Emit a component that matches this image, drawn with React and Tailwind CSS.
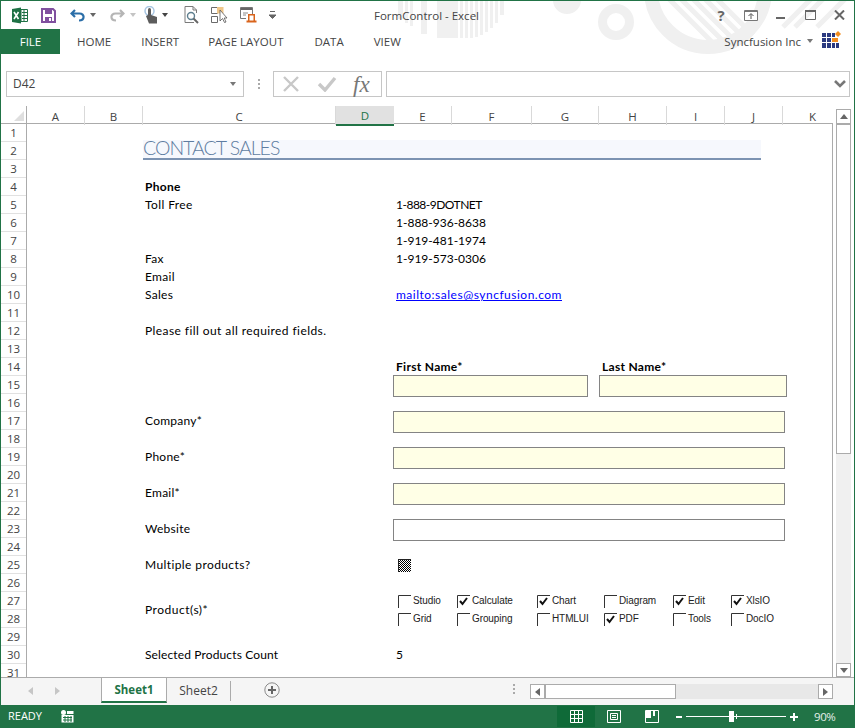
import React from 'react';

const columns = ['A', 'B', 'C', 'D', 'E', 'F', 'G', 'H', 'I', 'J', 'K'];
const rowNumbers = Array.from({ length: 31 }, (_, i) => i + 1);
const productRows = [
  [['Studio', false], ['Calculate', true], ['Chart', true], ['Diagram', false], ['Edit', true], ['XlsIO', true]],
  [['Grid', false], ['Grouping', false], ['HTMLUI', false], ['PDF', true], ['Tools', false], ['DocIO', false]],
];

const Watermark = () => (
  <svg className="absolute left-0 top-0 pointer-events-none" width="853" height="53" viewBox="0 0 853 53">
    <g fill="#f0f0f0">
      <rect x="397" y="0" width="5" height="18" />
      <rect x="404" y="0" width="3" height="22" />
      <rect x="409" y="0" width="3" height="25" />
      <rect x="420" y="0" width="6" height="33" />
      <rect x="436" y="0" width="21" height="37" />
      <rect x="459" y="0" width="3" height="37" />
      <rect x="464" y="0" width="3" height="37" />
      <rect x="469" y="0" width="3" height="37" />
      <rect x="474" y="0" width="3" height="36" />
      <rect x="479" y="0" width="3" height="34" />
      <rect x="484" y="0" width="3" height="31" />
      <rect x="489" y="0" width="3" height="27" />
      <rect x="494" y="0" width="3" height="22" />
      <rect x="499" y="0" width="4" height="14" />
      <circle cx="566" cy="-1" r="14" />
    </g>
    <circle cx="615" cy="21" r="13.5" fill="none" stroke="#f0f0f0" strokeWidth="9" />
    <clipPath id="ring">
      <circle cx="707" cy="-11" r="64" />
    </clipPath>
    <circle cx="707" cy="-11" r="57" fill="none" stroke="#f0f0f0" strokeWidth="14" />
    <g clipPath="url(#ring)" stroke="#f0f0f0" strokeWidth="5">
      <path d="M660 -10 L720 50" />
      <path d="M672 -10 L732 50" />
      <path d="M684 -10 L744 50" />
      <path d="M696 -10 L756 50" />
      <path d="M708 -10 L768 50" />
    </g>
    <g stroke="#f0f0f0" strokeWidth="5">
      <path d="M812 -4 L782 26" />
      <path d="M824 -4 L794 26" />
      <path d="M846 -4 L816 26" />
    </g>
  </svg>
);

const Quick = {
  Excel: () => (
    <svg width="17" height="17" viewBox="0 0 17 17">
      <path d="M1 2 L10 0.5 V16.5 L1 15 Z" fill="#1e7145" />
      <path d="M10 2.5 H16.5 V14.5 H10 Z" fill="#fff" stroke="#1e7145" />
      <path d="M11 5.5 H16 M11 8.5 H16 M11 11.5 H16 M13 3 V14" stroke="#1e7145" />
      <path d="M3 5 L7.5 12 M7.5 5 L3 12" stroke="#fff" strokeWidth="1.6" />
    </svg>
  ),
  Save: () => (
    <svg width="15" height="15" viewBox="0 0 15 15">
      <path d="M1 1 H12 L14 3 V14 H1 Z" fill="none" stroke="#80509f" strokeWidth="2" />
      <rect x="4" y="1" width="7" height="5" fill="#80509f" />
      <rect x="4" y="9" width="7" height="5" fill="#80509f" />
      <rect x="8" y="10" width="2" height="3" fill="#fff" />
    </svg>
  ),
  Undo: ({ color, className }) => (
    <svg className={className} width="15" height="13" viewBox="0 0 15 13">
      <path d="M5 1 L1.5 4.5 L5 8 M2 4.5 H9.5 C15 4.5 15 11.5 9 11.5" fill="none" stroke={color} strokeWidth="2.2" />
    </svg>
  ),
  Caret: ({ color }) => (
    <svg width="6" height="4" viewBox="0 0 6 4">
      <path d="M0 0 H6 L3 4 Z" fill={color} />
    </svg>
  ),
  Touch: () => (
    <svg width="16" height="18" viewBox="0 0 16 18">
      <circle cx="5.5" cy="5" r="4.5" fill="none" stroke="#a9c6e2" strokeWidth="1.5" />
      <rect x="4" y="2" width="3" height="9" rx="1.5" fill="#5c5c5c" />
      <path d="M2 10 L4 9 H7 L13 11 V17.5 H5 Z" fill="#5c5c5c" />
    </svg>
  ),
  Preview: () => (
    <svg width="15" height="18" viewBox="0 0 15 18">
      <path d="M10 16.5 H1 V0.5 H9 L12.5 4 V7 M9 .5 V4 H12.5" fill="none" stroke="#7a7a7a" />
      <circle cx="7" cy="10" r="3.5" fill="#fff" stroke="#5e7f8f" strokeWidth="1.4" />
      <path d="M9.5 12.5 L14 17" stroke="#666" strokeWidth="2" />
    </svg>
  ),
  Select: () => (
    <svg width="17" height="16" viewBox="0 0 17 16">
      <path d="M.5 .5 H6.5 V6.5 H.5 Z M.5 9.5 H6.5 V15.5 H.5 Z" fill="none" stroke="#6a6a6a" />
      <rect x="6" y="0" width="6.5" height="6.5" fill="#f0c78a" />
      <path d="M9 3 V14 L11.5 11.5 L13.5 15.5 L15 15 L13.2 11 H16 Z" fill="#fff" stroke="#555" strokeWidth=".8" />
    </svg>
  ),
  Form: () => (
    <svg width="17" height="16" viewBox="0 0 17 16">
      <path d="M.5 .5 H12.5 V8 M.5 .5 V11.5 H6" fill="none" stroke="#777" />
      <rect x="1" y="1" width="11" height="2" fill="#666" />
      <path d="M3 6 H8 M3 8 H6" stroke="#8a8a8a" />
      <path d="M8 7 H15 V13.5 H16.5 V15.5 H6.5 V13.5 H8 Z" fill="#d9641c" />
      <rect x="9.5" y="8.5" width="4" height="5" fill="#fff" />
    </svg>
  ),
  More: () => (
    <svg width="7" height="8" viewBox="0 0 7 8">
      <path d="M1 .5 H6 M0 4 H7 L3.5 7.5 Z" stroke="#666" fill="#666" />
    </svg>
  ),
};

const WindowButtons = () => (
  <div className="flex items-center h-[28px] pr-[9px]">
    <span className="w-[14px] text-center text-[15px] leading-none font-bold font-['Open_Sans'] text-[#666]">?</span>
    <svg className="ml-[16px]" width="14" height="11" viewBox="0 0 14 11">
      <path d="M.5 .5 H13.5 V10.5 H.5 Z" fill="#fff" stroke="#777" />
      <rect x="1" y="1" width="12" height="1" fill="#777" />
      <path d="M7 9 V4 M4.5 6 L7 3.5 L9.5 6" fill="none" stroke="#555" />
    </svg>
    <span className="ml-[18px] w-[9px] h-[2px] bg-[#666] mt-[5px]" />
    <svg className="ml-[20px]" width="11" height="10" viewBox="0 0 11 10">
      <path d="M.5 .5 H10.5 V9.5 H.5 Z" fill="none" stroke="#666" />
      <rect x="0" y="0" width="11" height="2" fill="#666" />
    </svg>
    <svg className="ml-[18px]" width="11" height="10" viewBox="0 0 11 10">
      <path d="M1 .5 L10 9.5 M10 .5 L1 9.5" stroke="#666" strokeWidth="2" />
    </svg>
  </div>
);

const TitleBar = () => (
  <div className="relative h-[53px] shrink-0">
    <Watermark />
    <div className="relative flex h-[28px] items-center">
      <span className="ml-[10px]"><Quick.Excel /></span>
      <span className="ml-[13px]"><Quick.Save /></span>
      <span className="ml-[14px]"><Quick.Undo color="#2b6ea8" /></span>
      <span className="ml-[5px] flex"><Quick.Caret color="#666" /></span>
      <span className="ml-[14px]"><Quick.Undo color="#b5b5b5" className="-scale-x-100" /></span>
      <span className="ml-[5px] flex"><Quick.Caret color="#c4c4c4" /></span>
      <span className="ml-[8px]"><Quick.Touch /></span>
      <span className="ml-[2px] flex"><Quick.Caret color="#444" /></span>
      <span className="ml-[16px]"><Quick.Preview /></span>
      <span className="ml-[12px]"><Quick.Select /></span>
      <span className="ml-[12px]"><Quick.Form /></span>
      <span className="ml-[12px] flex"><Quick.More /></span>
      <span className="absolute left-[373px] top-[6px] text-[11.5px] leading-[18px] text-[#444]">FormControl - Excel</span>
      <div className="ml-auto"><WindowButtons /></div>
    </div>
    <div className="relative flex h-[25px] items-center text-[11.5px] text-[#444]">
      <div className="w-[59px] h-[25px] bg-[#217346] text-white flex items-center justify-center">FILE</div>
      <span className="ml-[17px]">HOME</span>
      <span className="ml-[30px]">INSERT</span>
      <span className="ml-[29px]">PAGE LAYOUT</span>
      <span className="ml-[31px]">DATA</span>
      <span className="ml-[30px]">VIEW</span>
      <span className="ml-auto">Syncfusion Inc</span>
      <span className="ml-[6px] mb-[2px] flex"><Quick.Caret color="#777" /></span>
      <svg className="ml-[9px] mr-[13px] mb-[2px]" width="19" height="19" viewBox="0 0 19 19">
        <path d="M0 2 H4 V6 H0 Z M5 2 H9 V6 H5 Z M10 2 H13 V6 H10 Z M0 7 H4 V11 H0 Z M5 7 H9 V11 H5 Z M0 12 H4 V17 H0 Z M5 12 H9 V17 H5 Z M10 12 H13 V17 H10 Z M14 12 H17 V17 H14 Z" fill="#2b3a80" />
        <rect x="10" y="7" width="6" height="4" fill="#f28c1e" />
        <path d="M16 0 L19 3 L16 6 L13 3 Z" fill="#f28c1e" />
      </svg>
    </div>
  </div>
);

const FormulaBar = () => (
  <div className="flex h-[26px] mt-[17px] shrink-0 pl-[5px] pr-[4px]">
    <div className="w-[238px] border border-[#c6c6c6] flex items-center justify-between pl-[6px] pr-[7px] text-[12px] text-[#444]">
      <span>D42</span>
      <Quick.Caret color="#777" />
    </div>
    <div className="w-[29px] flex flex-col items-center justify-center gap-[2px]">
      <span className="w-[2px] h-[2px] bg-[#aaa]" />
      <span className="w-[2px] h-[2px] bg-[#aaa]" />
      <span className="w-[2px] h-[2px] bg-[#aaa]" />
    </div>
    <div className="w-[109px] border border-[#c6c6c6] flex items-center pl-[8px]">
      <svg width="18" height="16" viewBox="0 0 18 16">
        <path d="M2 1 L16 15 M16 1 L2 15" stroke="#c8c8c8" strokeWidth="2.4" />
      </svg>
      <svg className="ml-[17px]" width="20" height="16" viewBox="0 0 20 16">
        <path d="M2 8 L8 14 L18 2" fill="none" stroke="#c8c8c8" strokeWidth="3.4" />
      </svg>
      <span className="ml-[16px] text-[23px] leading-none italic text-[#777] font-['Liberation_Serif',serif]">fx</span>
    </div>
    <div className="ml-[4px] flex-1 border border-[#c6c6c6] flex items-center justify-end pr-[3px]">
      <svg width="12" height="8" viewBox="0 0 12 8">
        <path d="M1 1 L6 6 L11 1" fill="none" stroke="#777" strokeWidth="2.6" />
      </svg>
    </div>
  </div>
);

const ColumnHeader = () => (
  <div className="flex h-[18px] border-b border-[#ababab] text-[11.5px] text-[#444]">
    <div className="w-[26px] relative border-r border-[#ababab]">
      <span className="absolute right-[2px] bottom-[2px] w-0 h-0 border-l-[10px] border-l-transparent border-b-[10px] border-b-[#dfdfdf]" />
    </div>
    <div className="flex-1 grid grid-cols-[58px_58px_193px_58px_58px_80px_67px_68px_58px_58px_50px]">
      {columns.map((c) => {
        if (c === 'D') {
          return <div key={c} className="flex items-center justify-center pt-px bg-[#e1e1e1] border-b-2 border-[#217346] -mb-px text-[#217346]">{c}</div>;
        }
        // K is cut by the scrollbar, so its letter sits right of the visible middle
        if (c === 'K') {
          return <div key={c} className="flex items-center justify-center pt-px pl-[9px]">{c}</div>;
        }
        return <div key={c} className="flex items-center justify-center pt-px border-r border-[#d9d9d9]">{c}</div>;
      })}
    </div>
  </div>
);

const Cell = ({ className, children }) => (
  <div className={`flex items-end pl-[2px] pb-px leading-[17px] whitespace-nowrap ${className}`}>{children}</div>
);

const Field = ({ className }) => (
  <div className={`h-[22px] border border-[#848484] ${className}`} />
);

const CheckBox = ({ checked }) => (
  <svg className="shrink-0" width="13" height="13" viewBox="0 0 13 13">
    <path d="M.5 13 V.5 H13" fill="none" stroke="#333" />
    {checked && <path d="M3 6 L5.5 9 L10 3" fill="none" stroke="#111" strokeWidth="2" />}
  </svg>
);

const Sheet = () => (
  <div className="flex-1 flex min-h-0 overflow-hidden">
    <div className="w-[26px] border-r border-[#ababab] text-[11.5px] text-[#444]">
      {rowNumbers.map((n) => (
        <div key={n} className="h-[18px] border-b border-[#e1e1e1] flex items-center justify-center">{n}</div>
      ))}
    </div>
    <div className="flex-1 border-r border-[#ababab] overflow-hidden font-['Lato',sans-serif] text-[12px] text-black">
      <div className="grid grid-cols-[58px_58px_193px_58px_58px_80px_67px_68px_58px_58px_50px] grid-rows-[repeat(31,18px)]">
        <div className="col-start-3 col-end-[10] row-start-1 row-span-2 mt-[16px] h-[20px] -mr-[36px] pb-[2px] border-b-2 border-[#7c93b2] bg-[#f6f8fd] flex items-center font-light text-[19.5px] leading-none text-[#5f7da1] tracking-[-1px]">
          CONTACT SALES
        </div>
        <Cell className="col-start-3 row-start-4 font-bold tracking-[0.3px]">Phone</Cell>
        <Cell className="col-start-3 row-start-5 tracking-[0.4px]">Toll Free</Cell>
        <Cell className="col-start-5 col-span-2 row-start-5 tracking-[-0.5px]">1-888-9DOTNET</Cell>
        <Cell className="col-start-5 col-span-2 row-start-6">1-888-936-8638</Cell>
        <Cell className="col-start-5 col-span-2 row-start-7">1-919-481-1974</Cell>
        <Cell className="col-start-3 row-start-8 tracking-[0.3px]">Fax</Cell>
        <Cell className="col-start-5 col-span-2 row-start-8">1-919-573-0306</Cell>
        <Cell className="col-start-3 row-start-9 tracking-[0.3px]">Email</Cell>
        <Cell className="col-start-3 row-start-10 tracking-[0.3px]">Sales</Cell>
        <Cell className="col-start-5 col-span-4 row-start-10 text-[#0000ff] underline tracking-[0.5px]">mailto:sales@syncfusion.com</Cell>
        <Cell className="col-start-3 col-span-2 row-start-12 tracking-[0.42px]">Please fill out all required fields.</Cell>
        <Cell className="col-start-5 col-span-2 row-start-14 font-bold tracking-[0.3px]">First Name*</Cell>
        <Cell className="col-start-8 col-span-2 row-start-14 ml-px font-bold tracking-[0.3px]">Last Name*</Cell>
        <Field className="col-start-5 col-end-[8] row-start-15 row-span-2 -ml-px -mt-px mr-[11px] bg-[#ffffe6]" />
        <Field className="col-start-8 col-end-[11] row-start-15 row-span-2 -mt-px -mr-[4px] bg-[#ffffe6]" />
        <Cell className="col-start-3 row-start-17 tracking-[0.25px]">Company*</Cell>
        <Field className="col-start-5 col-end-[11] row-start-17 row-span-2 -ml-px -mt-px -mr-[2px] bg-[#ffffe6]" />
        <Cell className="col-start-3 row-start-19 tracking-[0.25px]">Phone*</Cell>
        <Field className="col-start-5 col-end-[11] row-start-19 row-span-2 -ml-px -mt-px -mr-[2px] bg-[#ffffe6]" />
        <Cell className="col-start-3 row-start-21 tracking-[0.25px]">Email*</Cell>
        <Field className="col-start-5 col-end-[11] row-start-21 row-span-2 -ml-px -mt-px -mr-[2px] bg-[#ffffe6]" />
        <Cell className="col-start-3 row-start-23 tracking-[0.25px]">Website</Cell>
        <Field className="col-start-5 col-end-[11] row-start-23 row-span-2 -ml-px -mt-px -mr-[2px] bg-white" />
        <Cell className="col-start-3 row-start-25 tracking-[0.4px]">Multiple products?</Cell>
        <div className="col-start-5 row-start-25 flex items-center pl-[4px]">
          <span className="w-[13px] h-[13px] bg-[repeating-conic-gradient(#000_0_25%,#fff_0_50%)] bg-size-[2px_2px] border-l border-t border-[#222]" />
        </div>
        <Cell className="col-start-3 row-start-27 row-span-2 !items-center tracking-[0.5px]">Product(s)*</Cell>
        <div className="col-start-5 col-end-[12] row-start-27 row-span-2 pl-[4px] font-['Liberation_Sans',sans-serif] text-[10px] tracking-[-0.1px] text-[#222]">
          {productRows.map((row, r) => (
            <div key={r} className="h-[18px] grid grid-cols-[59px_80px_67px_69px_58px_60px] items-center">
              {row.map(([label, checked]) => (
                <div key={label} className="flex items-center gap-[2px]">
                  <CheckBox checked={checked} />
                  <span className="-mt-[2px]">{label}</span>
                </div>
              ))}
            </div>
          ))}
        </div>
        <Cell className="col-start-3 col-span-2 row-start-30 tracking-[0.13px]">Selected Products Count</Cell>
        <Cell className="col-start-5 row-start-30">5</Cell>
      </div>
    </div>
  </div>
);

const ScrollButton = ({ className, children }) => (
  <div className={`bg-white border border-[#ababab] flex items-center justify-center ${className}`}>{children}</div>
);

const VerticalScroll = () => (
  <div className="w-[21px] shrink-0 pt-[3px] pl-[3px] pr-[3px] flex flex-col bg-white">
    <div className="flex-1 flex flex-col bg-[#f0f0f0]">
      <ScrollButton className="h-[15px]">
        <svg width="8" height="5" viewBox="0 0 8 5"><path d="M0 5 L4 0 L8 5 Z" fill="#666" /></svg>
      </ScrollButton>
      <div className="h-[330px] bg-white border border-[#ababab]" />
      <div className="flex-1" />
      <ScrollButton className="h-[14px]">
        <svg width="8" height="5" viewBox="0 0 8 5"><path d="M0 0 L8 0 L4 5 Z" fill="#666" /></svg>
      </ScrollButton>
    </div>
  </div>
);

const SheetTabs = () => (
  <div className="h-[28px] shrink-0 bg-[#f5f5f5] border-t border-[#ababab] flex text-[12px] text-[#444]">
    <div className="w-[100px] flex items-center pl-[27px] pb-[2px] gap-[22px]">
      <svg width="5" height="8" viewBox="0 0 5 8"><path d="M5 0 V8 L0 4 Z" fill="#c6c6c6" /></svg>
      <svg width="5" height="8" viewBox="0 0 5 8"><path d="M0 0 V8 L5 4 Z" fill="#c6c6c6" /></svg>
    </div>
    <div className="-mt-px h-[26px] w-[66px] bg-white border-x border-t border-[#ababab] border-b-2 border-b-[#217346] flex items-center justify-center pt-px text-[11.5px] font-bold text-[#217346]">
      Sheet1
    </div>
    <div className="w-[64px] flex items-center justify-center h-[20px] mt-[3px] border-r border-[#ababab]">Sheet2</div>
    <svg className="ml-[33px] mt-[4px]" width="16" height="16" viewBox="0 0 16 16">
      <circle cx="8" cy="8" r="7.2" fill="none" stroke="#8a8a8a" />
      <path d="M8 4 V12 M4 8 H12" stroke="#666" strokeWidth="2" />
    </svg>
    <div className="ml-[233px] mt-[6px] h-[12px] flex flex-col gap-[2px]">
      <span className="w-[2px] h-[2px] bg-[#aaa]" />
      <span className="w-[2px] h-[2px] bg-[#aaa]" />
      <span className="w-[2px] h-[2px] bg-[#aaa]" />
    </div>
    <div className="ml-[15px] mt-[6px] w-[303px] h-[15px] flex bg-[#e8e8e8]">
      <ScrollButton className="w-[15px]">
        <svg width="5" height="8" viewBox="0 0 5 8"><path d="M5 0 V8 L0 4 Z" fill="#666" /></svg>
      </ScrollButton>
      <div className="w-[131px] bg-white border border-[#ababab]" />
      <ScrollButton className="w-[15px] ml-auto">
        <svg width="5" height="8" viewBox="0 0 5 8"><path d="M0 0 V8 L5 4 Z" fill="#666" /></svg>
      </ScrollButton>
    </div>
  </div>
);

const StatusBar = () => (
  <div className="h-[23px] shrink-0 bg-[#217346] -mx-px flex items-center text-[11px] text-white">
    <span className="ml-[8px] w-[53px]">READY</span>
    <svg width="13" height="13" viewBox="0 0 13 13">
      <circle cx="2.5" cy="2.5" r="2.5" fill="#fff" />
      <path d="M6 1 H12.5 V4 H6 Z M.5 5 H12.5 V12.5 H.5 Z" fill="#fff" />
      <path d="M2 7.5 H11 M2 10 H11 M4 6 V12 M7 6 V12 M10 6 V12" stroke="#217346" />
    </svg>
    <div className="ml-[483px] w-[38px] h-[21px] bg-[#0f6a38] flex items-center justify-center">
      <svg width="13" height="13" viewBox="0 0 13 13">
        <path d="M.5 .5 H12.5 V12.5 H.5 Z M.5 4.5 H12.5 M.5 8.5 H12.5 M4.5 .5 V12.5 M8.5 .5 V12.5" fill="none" stroke="#fff" />
      </svg>
    </div>
    <svg className="ml-[12px]" width="14" height="13" viewBox="0 0 14 13">
      <path d="M.5 .5 H13.5 V12.5 H.5 Z M3.5 3.5 H10.5 V9.5 H3.5 Z M5 5.5 H9 M5 7.5 H9" fill="none" stroke="#fff" />
    </svg>
    <svg className="ml-[24px]" width="14" height="13" viewBox="0 0 14 13">
      <path d="M.5 .5 H13.5 V12.5 H.5 Z" fill="none" stroke="#fff" />
      <path d="M1 1 H6 V8 H1 Z M8 1 H10 V6 H8 Z" fill="#fff" />
    </svg>
    <span className="ml-[17px] w-[6px] h-[2px] bg-white" />
    <div className="ml-[4px] w-[100px] h-[1px] bg-white relative">
      <span className="absolute left-[43px] -top-[5px] w-[5px] h-[11px] bg-white" />
      <span className="absolute left-[50px] -top-[2px] w-px h-[5px] bg-white" />
    </div>
    <svg className="ml-[4px]" width="8" height="8" viewBox="0 0 8 8">
      <path d="M4 0 V8 M0 4 H8" stroke="#fff" strokeWidth="2" />
    </svg>
    <span className="ml-[16px] text-[#e4efe9] text-[11.5px] tracking-[-0.4px]">90%</span>
  </div>
);

const App = () => (
  <div className="relative w-[855px] h-[728px] overflow-hidden bg-white border-x border-t border-[#217346] flex flex-col font-['Open_Sans',sans-serif]">
    <TitleBar />
    <FormulaBar />
    <div className="flex-1 flex min-h-0 mt-[9px]">
      <div className="w-[832px] flex flex-col min-h-0">
        <ColumnHeader />
        <Sheet />
      </div>
      <VerticalScroll />
    </div>
    <SheetTabs />
    <StatusBar />
  </div>
);

export default App;
